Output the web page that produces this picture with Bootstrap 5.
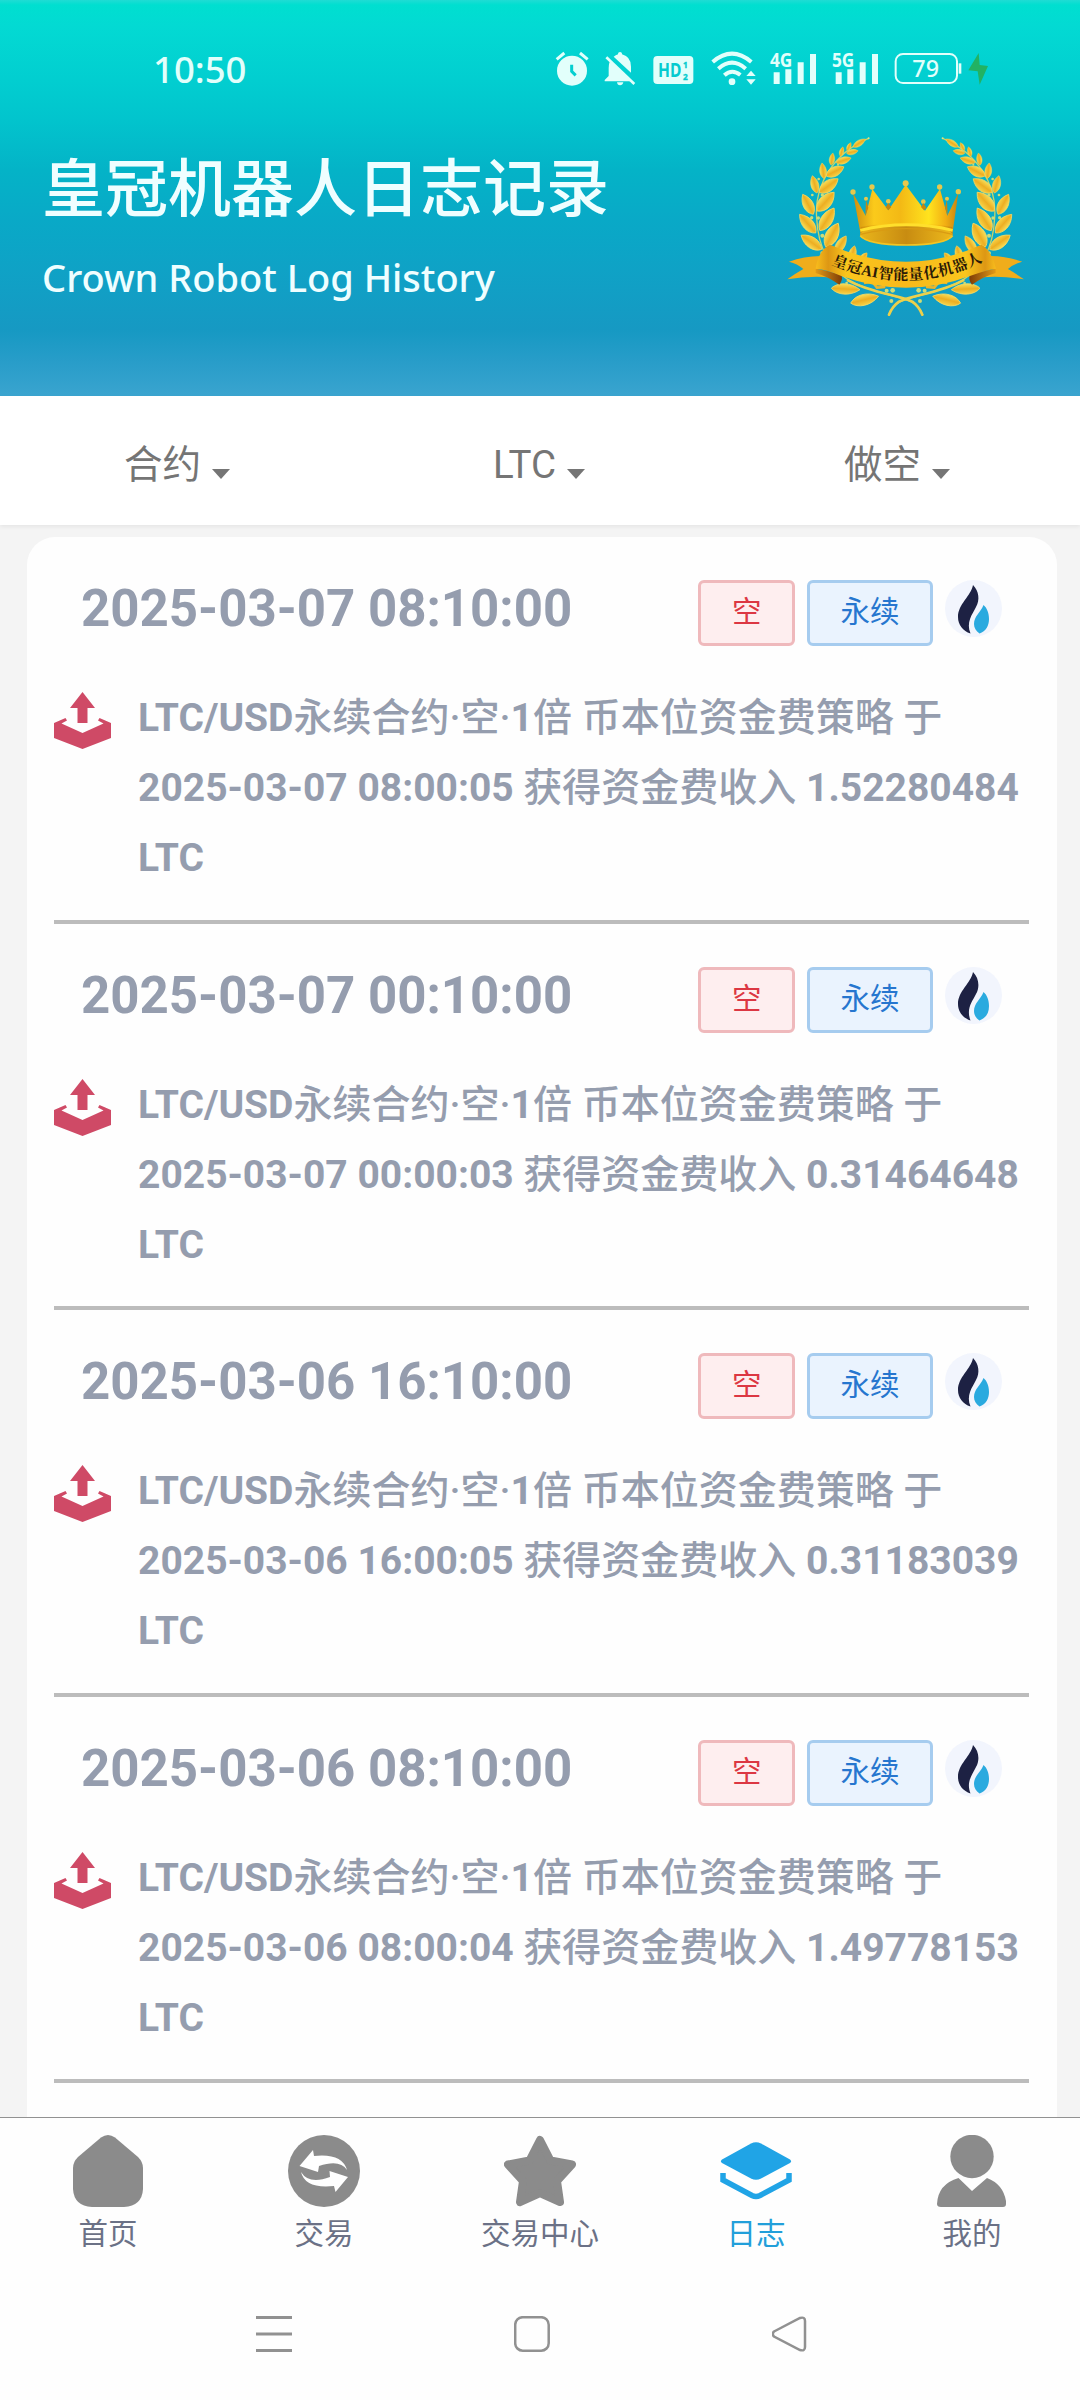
<!DOCTYPE html>
<html lang="zh-CN">
<head>
<meta charset="utf-8">
<meta name="viewport" content="width=device-width, initial-scale=1">
<title>皇冠机器人日志记录</title>
<link href="https://cdn.jsdelivr.net/npm/bootstrap@5.3.0/dist/css/bootstrap.min.css" rel="stylesheet">
<style>
  body { width: 1080px; height: 2400px; overflow: hidden; background: #f4f4f4; font-family: Roboto, "Noto Sans CJK SC", sans-serif; }
  .app-header { height: 396px; color: #effeff; font-family: "Noto Sans", "Noto Sans CJK SC", sans-serif;
    background: linear-gradient(#1fdcd4 0, #00dfd0 5px, #03dad3 25px, #02ced0 80px, #02c4cd 120px, #04b3c7 170px, #09a9c7 220px, #0fa2c6 270px, #1699c3 330px, #289dc9 362px, #3aa4cf 396px); }
  .status-bar { height: 133px; padding: 48px 92px 0 153px; color: #e2fffb; }
  .clock { font-size: 36.5px; line-height: 42px; font-weight: 500; }
  .status-icons { gap: 16px; padding-top: 2px; }
  .status-icons svg, .ico { overflow: visible; display: block; flex: none; }
  .head-row { padding-left: 42px; padding-right: 53px; }
  .head-title { font-size: 63px; font-weight: 500; line-height: 70px; margin: 19px 0 0; white-space: nowrap; }
  .head-sub { font-size: 38px; font-weight: 500; line-height: 50px; margin: 30px 0 0; white-space: nowrap; }
  .filter-bar { height: 129px; box-shadow: 0 2px 4px rgba(0,0,0,.06); position: relative; padding-right: 6px; }
  .filter-btn { font-size: 38.5px; line-height: 46px; color: #757575; border: 0; padding: 9px 0 0; }
  .filter-btn::after { border-top: 10px solid; border-left: 9.5px solid transparent; border-right: 9.5px solid transparent; margin-left: 11px; vertical-align: -1px; }
  .log-card { margin: 12px 23.5px 0 27px; padding: 0 28px 0 27px; border-radius: 28px 28px 0 0; background: #fefefe; height: 1580px; }
  .log-item { height: 386.5px; border-bottom: 4px solid #bcbcbc; padding-top: 43px; color: #959dae; }
  .log-head { padding: 0 26.5px 0 27px; height: 66px; }
  .log-date { font-size: 51px; line-height: 58px; font-weight: 700; }
  .log-tag { font-size: 29.5px; line-height: 58px; height: 66px; padding: 0 30.500px 2px; border: 3px solid; border-radius: 6px; font-weight: 400; }
  .tag-short { color: #dc3743; background: #feeeef; border-color: #efb9bc; }
  .tag-swap { color: #2676cf; background: #eaf3fe; border-color: #a6ccef; }
  .log-body { padding-top: 35px; }
  .log-text { font-size: 39px; line-height: 70px; margin: 2px 0 0 27px; font-weight: 700; white-space: nowrap; }
  .log-text span { font-weight: 500; }
  .log-body svg { margin-top: 11px; }
  .tab-bar { height: 167px; border-top: 1px solid #929292; background: #fefefe; padding-top: 17px; }
  .tab-link { width: 216px; color: #6b7186; font-size: 29.5px; line-height: 36px; text-decoration: none; gap: 9px; }
  .tab-link.active { color: #229fda; }
  .sys-bar { height: 116px; background: #fefefe; padding: 32px 0 0 255px; gap: 222px; }
</style>
</head>
<body class="d-flex flex-column">
<svg width="0" height="0" class="position-absolute" aria-hidden="true">
  <defs>
    <linearGradient id="gLeaf" x1="0" y1="0" x2="0" y2="1"><stop offset="0" stop-color="#f8de58"/><stop offset=".5" stop-color="#edae22"/><stop offset="1" stop-color="#f6d348"/></linearGradient>
    <linearGradient id="gCrown" x1="0" y1="0" x2="1" y2="0"><stop offset="0" stop-color="#cf8c0c"/><stop offset=".2" stop-color="#fbca1b"/><stop offset=".45" stop-color="#f3b915"/><stop offset=".72" stop-color="#ffe31e"/><stop offset=".88" stop-color="#f2ae13"/><stop offset="1" stop-color="#c5830f"/></linearGradient>
    <linearGradient id="gInner" x1="0" y1="0" x2="1" y2="0"><stop offset="0" stop-color="#e9b51b"/><stop offset=".5" stop-color="#c88c11"/><stop offset="1" stop-color="#edb91c"/></linearGradient>
    <linearGradient id="gRibbon" x1="0" y1="0" x2="1" y2="0"><stop offset="0" stop-color="#f8bd1c"/><stop offset=".07" stop-color="#dd9714"/><stop offset=".17" stop-color="#fac61d"/><stop offset=".5" stop-color="#f8b91b"/><stop offset=".83" stop-color="#fac61d"/><stop offset=".94" stop-color="#dd9714"/><stop offset="1" stop-color="#f8bd1c"/></linearGradient>
    <linearGradient id="gCurl" x1="0" y1="0" x2="1" y2="0"><stop offset="0" stop-color="#e09a18"/><stop offset="1" stop-color="#7e3c07"/></linearGradient>
    <path id="leaf" d="M-50 0C-30-27 15-31 50 0C15 31-30 27-50 0Z" fill="url(#gLeaf)" stroke="#f6da62" stroke-width="3"/>
    <g id="branch">
      <path d="M324 86C220 130 160 225 168 325C172 410 200 470 262 510C330 550 425 560 455 578Q475 590 487 617" fill="none" stroke="#c8d36a" stroke-width="4"/>
      <path d="M262 512C330 550 425 558 455 576Q475 590 485 615" fill="none" stroke="#ecd04b" stroke-width="8" stroke-linecap="round"/>
      <circle cx="324" cy="86" r="3" fill="#e7e37a"/>
      <use href="#leaf" transform="translate(296 100) rotate(-33) scale(.44 .4)"/>
      <use href="#leaf" transform="translate(265 111) rotate(-65) scale(.27)"/>
      <use href="#leaf" transform="translate(275 127) rotate(-12) scale(.36)"/>
      <use href="#leaf" transform="translate(243 126) rotate(-75) scale(.3)"/>
      <use href="#leaf" transform="translate(249 152) rotate(-18) scale(.47 .46)"/>
      <use href="#leaf" transform="translate(214 148) rotate(-82) scale(.37)"/>
      <use href="#leaf" transform="translate(223 185) rotate(-27) scale(.6 .65)"/>
      <use href="#leaf" transform="translate(187 183) rotate(-97) scale(.47)"/>
      <use href="#leaf" transform="translate(204 228) rotate(-36) scale(.7 .75)"/>
      <use href="#leaf" transform="translate(162 224) rotate(-105) scale(.54)"/>
      <use href="#leaf" transform="translate(195 276) rotate(-48) scale(.76 .85)"/>
      <use href="#leaf" transform="translate(142 284) rotate(-118) scale(.68 .7)"/>
      <use href="#leaf" transform="translate(199 329) rotate(-58) scale(.8 .8)"/>
      <use href="#leaf" transform="translate(141 342) rotate(-131) scale(.74 .75)"/>
      <use href="#leaf" transform="translate(214 376) rotate(-62) scale(.8 .85)"/>
      <use href="#leaf" transform="translate(152 398) rotate(-145) scale(.75)"/>
      <use href="#leaf" transform="translate(240 405) rotate(-58) scale(.62 .6)"/>
      <use href="#leaf" transform="translate(276 430) rotate(-75) scale(.45 .5)"/>
      <use href="#leaf" transform="translate(308 443) rotate(-50) scale(.35 .4)"/>
      <use href="#leaf" transform="translate(255 538) rotate(3) scale(.86 .72)"/>
      <use href="#leaf" transform="translate(312 570) rotate(-14) scale(.86 .75)"/>
      <path d="M310 520l25-4 14 18 25-2" fill="none" stroke="#e9b52c" stroke-width="8"/>
      <g fill="#cddc78"><circle cx="185" cy="256" r="5"/><circle cx="155" cy="256" r="4"/><circle cx="173" cy="325" r="5"/><circle cx="153" cy="324" r="5"/><circle cx="185" cy="378" r="6"/><circle cx="184" cy="430" r="5"/><circle cx="232" cy="165" r="3"/><circle cx="174" cy="208" r="4"/><circle cx="378" cy="543" r="6"/><circle cx="396" cy="542" r="7"/><circle cx="392" cy="574" r="6"/><circle cx="258" cy="520" r="4"/></g>
    </g>
    <g id="ribbonEnd">
      <path d="M85 456Q130 440 180 439L168 482L245 507Q160 495 80 509Q105 491 128 478Q110 462 85 456Z" fill="#f0ad1b"/>
      <path d="M165 477Q190 480 240 495Q250 505 236 525Q200 500 165 490Z" fill="url(#gCurl)"/>
    </g>
    <symbol id="emblem" viewBox="70 70 730 560">
      <use href="#branch"/><use href="#branch" transform="matrix(-1 0 0 1 870 0)"/>
      <path d="M300 374L277 250L315 318L335 238L383 302L435 225L493 303L538 238L560 318L593 250L575 374Q437 320 300 374Z" fill="url(#gCrown)"/>
      <path d="M300 352Q437 326 575 352V375H300Z" fill="url(#gCrown)"/>
      <ellipse cx="437" cy="376" rx="139" ry="31" fill="url(#gInner)"/>
      <path d="M299 362Q437 329 576 362" fill="none" stroke="#ffdf2c" stroke-width="9"/>
      <path d="M299 374Q437 340 576 374" fill="none" stroke="#d99b13" stroke-width="4"/>
      <path d="M299 378Q320 405 437 406Q555 405 576 378" fill="none" stroke="#f4c423" stroke-width="5"/>
      <g fill="#e7c84c"><circle cx="277" cy="247" r="8"/><circle cx="334" cy="232" r="8"/><circle cx="435" cy="221" r="9"/><circle cx="537" cy="232" r="8"/><circle cx="593" cy="246" r="8"/><circle cx="316" cy="267" r="6"/><circle cx="383" cy="275" r="7"/><circle cx="488" cy="276" r="7"/><circle cx="559" cy="267" r="6"/></g>
      <path d="M316 270l7 24-9 24zM383 280l9 12-9 10-8-9zM488 280l9 14-7 8-9-10zM559 270l-6 24 8 24z" fill="#c6860f"/>
      <use href="#ribbonEnd"/><use href="#ribbonEnd" transform="matrix(-1 0 0 1 870 0)"/>
      <path d="M208 405Q437 508 662 405Q692 420 706 477Q680 480 630 498Q437 570 240 498Q200 480 165 477Q174 420 208 405Z" fill="url(#gRibbon)"/>
      <path id="arcText" d="M212 463Q440 564 674 452" fill="none"/>
      <text font-family="'Liberation Serif','Noto Serif CJK SC','Noto Sans CJK SC',serif" font-weight="700" font-size="45" fill="#2b1a07"><textPath href="#arcText" textLength="470">皇冠AI智能量化机器人</textPath></text>
    </symbol>
    <symbol id="tray" viewBox="0 0 57 57">
      <path d="M28.5 0L41 16H33.5V31H23.500V16H16Z" fill="#cf4a66"/>
      <path d="M0 31L11.500 26L13 28.500L7.500 31.500L28.500 41L49.500 31.500L44 28.500L45.500 26L57 31V46L28.500 57L0 46Z" fill="#cf4a66"/>
    </symbol>
    <symbol id="flame" viewBox="0 0 57 57">
      <circle cx="28.500" cy="28.500" r="28.500" fill="#f2f5fd"/>
      <path d="M28 5C26 16 13 24 13 37C13 45 18 51 25.500 53.500C21 42 27 35 31 27C35 20 34 11 28 5Z" fill="#1d2143"/>
      <path d="M38.500 25C36 32 29 36 29 44C29 48 31 51 34.500 53.500C41 51 44 46 44 39C44 33 42 28 38.500 25Z" fill="#2aaadf"/>
    </symbol>
  </defs>
</svg>

<header class="app-header flex-shrink-0">
  <div class="status-bar d-flex justify-content-between align-items-start">
    <div class="clock">10:50</div>
    <div class="status-icons d-flex">
      <svg width="32" height="40" viewBox="48 60 96 120" fill="currentColor"><circle cx="96" cy="122" r="45"/><path d="M50 88L73 69M143 88L120 69" stroke="currentColor" stroke-width="9"/><path d="M95 104v20l12 12" fill="none" stroke="#03cfd0" stroke-width="9"/></svg>
      <svg width="32.700" height="40" viewBox="192 60 98 120" fill="currentColor"><path d="M210 94L274 154H194V150L206 138V113Q206 101 210 94ZM221 80Q227 75 234 73V71Q234 66 240 66T246 71V73Q273 80 273 110V128ZM231 157H250Q248 166 240 166T231 157Z"/><path d="M199 82L283 162" stroke="currentColor" stroke-width="8"/></svg>
      <svg width="42.700" height="40" viewBox="338 60 128 120" fill="currentColor"><rect x="342" y="78" width="120" height="84" rx="12"/><g fill="#04cbcf" font-weight="700"><text x="356" y="142" font-size="61" textLength="70" lengthAdjust="spacingAndGlyphs">HD</text><text x="431" y="113" font-size="25" stroke="#04cbcf">1</text><text x="431" y="151" font-size="25" stroke="#04cbcf">2</text></g></svg>
      <svg width="42.700" height="40" viewBox="514 60 128 120" fill="none" stroke="currentColor" stroke-width="12"><path d="M519 96Q577 46 635 96M536 116Q577 80 618 116M554 136Q577 115 602 135"/><circle cx="577" cy="155" r="10" fill="currentColor" stroke="none"/><path d="M620 138h28l-14-16zM620 148h28l-14 16z" fill="currentColor" stroke="none"/></svg>
      <svg width="46.700" height="40" viewBox="690 60 140 120" fill="currentColor"><path d="M701 127h18v35h-18zM736 118h18v44h-18zM773 97h18v65h-18zM810 72h18v90h-18z"/><text x="690" y="111" font-size="61" font-weight="700" textLength="67" lengthAdjust="spacingAndGlyphs">4G</text></svg>
      <svg width="46.700" height="40" viewBox="878 60 140 120" fill="currentColor"><path d="M889 127h18v35h-18zM924 118h18v44h-18zM961 97h18v65h-18zM998 72h18v90h-18z"/><text x="878" y="111" font-size="61" font-weight="700" textLength="67" lengthAdjust="spacingAndGlyphs">5G</text></svg>
      <svg width="57" height="40" viewBox="1066 60 171 120" fill="currentColor"><rect x="1068" y="72" width="184" height="87" rx="22" fill="none" stroke="currentColor" stroke-width="6"/><path d="M1257 100h8v31h-8z"/><text x="1118" y="142" font-size="72" font-weight="500" textLength="80" lengthAdjust="spacingAndGlyphs">79</text></svg>
      <svg width="20" height="40" viewBox="1285 60 60 120"><path d="M1317 69L1286 121L1314 124L1320 164L1345 108L1320 105Z" fill="#22b263"/></svg>
    </div>
  </div>
  <div class="head-row d-flex justify-content-between align-items-start">
    <div>
      <h1 class="head-title">皇冠机器人日志记录</h1>
      <p class="head-sub">Crown Robot Log History</p>
    </div>
    <svg class="ico" width="243.300" height="186.700"><use href="#emblem"/></svg>
  </div>
</header>

<nav class="filter-bar d-flex align-items-center bg-white flex-shrink-0">
  <div class="col text-center pe-2"><button class="btn filter-btn dropdown-toggle" type="button">合约</button></div>
  <div class="col text-center"><button class="btn filter-btn dropdown-toggle" type="button">LTC</button></div>
  <div class="col text-center ps-1"><button class="btn filter-btn dropdown-toggle" type="button">做空</button></div>
</nav>

<main class="log-card flex-shrink-0">
  <article class="log-item">
    <div class="log-head d-flex justify-content-between">
      <div class="log-date">2025-03-07 08:10:00</div>
      <div class="d-flex align-items-start gap-2"><span class="log-tag tag-short me-1">空</span><span class="log-tag tag-swap me-1">永续</span><svg width="57" height="57"><use href="#flame"/></svg></div>
    </div>
    <div class="log-body d-flex align-items-start">
      <svg class="ico" width="57" height="57"><use href="#tray"/></svg>
      <p class="log-text">LTC/USD<span>永续合约·空·</span>1<span>倍 币本位资金费策略 于</span><br>2025-03-07 08:00:05 <span>获得资金费收入</span> 1.52280484<br>LTC</p>
    </div>
  </article>
  <article class="log-item">
    <div class="log-head d-flex justify-content-between">
      <div class="log-date">2025-03-07 00:10:00</div>
      <div class="d-flex align-items-start gap-2"><span class="log-tag tag-short me-1">空</span><span class="log-tag tag-swap me-1">永续</span><svg width="57" height="57"><use href="#flame"/></svg></div>
    </div>
    <div class="log-body d-flex align-items-start">
      <svg class="ico" width="57" height="57"><use href="#tray"/></svg>
      <p class="log-text">LTC/USD<span>永续合约·空·</span>1<span>倍 币本位资金费策略 于</span><br>2025-03-07 00:00:03 <span>获得资金费收入</span> 0.31464648<br>LTC</p>
    </div>
  </article>
  <article class="log-item">
    <div class="log-head d-flex justify-content-between">
      <div class="log-date">2025-03-06 16:10:00</div>
      <div class="d-flex align-items-start gap-2"><span class="log-tag tag-short me-1">空</span><span class="log-tag tag-swap me-1">永续</span><svg width="57" height="57"><use href="#flame"/></svg></div>
    </div>
    <div class="log-body d-flex align-items-start">
      <svg class="ico" width="57" height="57"><use href="#tray"/></svg>
      <p class="log-text">LTC/USD<span>永续合约·空·</span>1<span>倍 币本位资金费策略 于</span><br>2025-03-06 16:00:05 <span>获得资金费收入</span> 0.31183039<br>LTC</p>
    </div>
  </article>
  <article class="log-item">
    <div class="log-head d-flex justify-content-between">
      <div class="log-date">2025-03-06 08:10:00</div>
      <div class="d-flex align-items-start gap-2"><span class="log-tag tag-short me-1">空</span><span class="log-tag tag-swap me-1">永续</span><svg width="57" height="57"><use href="#flame"/></svg></div>
    </div>
    <div class="log-body d-flex align-items-start">
      <svg class="ico" width="57" height="57"><use href="#tray"/></svg>
      <p class="log-text">LTC/USD<span>永续合约·空·</span>1<span>倍 币本位资金费策略 于</span><br>2025-03-06 08:00:04 <span>获得资金费收入</span> 1.49778153<br>LTC</p>
    </div>
  </article>
</main>

<nav class="tab-bar d-flex flex-shrink-0">
  <a class="tab-link d-flex flex-column align-items-center" href="#"><svg width="72" height="72" viewBox="0 0 72 72" fill="#8b8b8b"><path d="M29 2.500Q36-2.500 43 2.500L66 22Q71 27 71 33V54Q70 71 52 72H20Q2 71 1 54V33Q1 27 6 22Z"/></svg>首页</a>
  <a class="tab-link d-flex flex-column align-items-center" href="#"><svg width="72" height="72" viewBox="0 0 72 72"><circle cx="36" cy="36" r="36" fill="#8b8b8b"/><path d="M11.500 31L25 15L26 21Q54 18 59 35Q52 24 31 31L30 37Z" fill="#fff"/><path d="M60 42L47.500 57L46 51Q17 54 13 37Q21 50 42 42L41.500 36Z" fill="#fff"/></svg>交易</a>
  <a class="tab-link d-flex flex-column align-items-center" href="#"><svg width="72" height="72" viewBox="0 0 72 72"><path d="M36 5L46.500 25.500L68 29.500L53 46L56 67L36 58L16 67L19 46L4 29.500L25.500 25.500Z" fill="#8b8b8b" stroke="#8b8b8b" stroke-width="8" stroke-linejoin="round"/></svg>交易中心</a>
  <a class="tab-link active d-flex flex-column align-items-center" href="#"><svg width="72" height="72" viewBox="0 0 72 72"><path d="M31 8.500Q36 6 41 8.500L70 24.500Q72 26 70 28L41 43.500Q36 46 31 43.500L2 28Q0 26 2 24.500Z" fill="#20a4e6"/><path d="M3 38V45L32 60.500Q36 62.500 40 60.500L69 45V38" fill="none" stroke="#20a4e6" stroke-width="5.500"/></svg>日志</a>
  <a class="tab-link d-flex flex-column align-items-center" href="#"><svg width="72" height="72" viewBox="0 0 72 72" fill="#8b8b8b"><circle cx="36" cy="21.500" r="21.700"/><path d="M22.500 43L36 56L51 43Q67 49 70 66V69Q70 72 67 72H5Q1 72 1 69Q2 49 22.500 43Z"/></svg>我的</a>
</nav>
<div class="sys-bar d-flex align-items-start flex-shrink-0">
  <svg width="37" height="36" viewBox="0 0 37 36" stroke="#919191" stroke-width="3"><path d="M1 1.500H37M1 18H37M1 34.500H37"/></svg>
  <svg width="36" height="36" viewBox="0 0 36 36" fill="none" stroke="#919191" stroke-width="2.500"><rect x="1.200" y="1.200" width="33.500" height="33.500" rx="7.500"/></svg>
  <svg width="36" height="36" viewBox="0 0 36 36" fill="none" stroke="#919191" stroke-width="2.500"><path d="M2 15.500L28 2Q33 .5 33 5V31Q33 35.500 28 34L2 20.500Q-.5 18 2 15.500Z"/></svg>
</div>
<script src="https://cdn.jsdelivr.net/npm/bootstrap@5.3.0/dist/js/bootstrap.bundle.min.js"></script>
</body>
</html>
